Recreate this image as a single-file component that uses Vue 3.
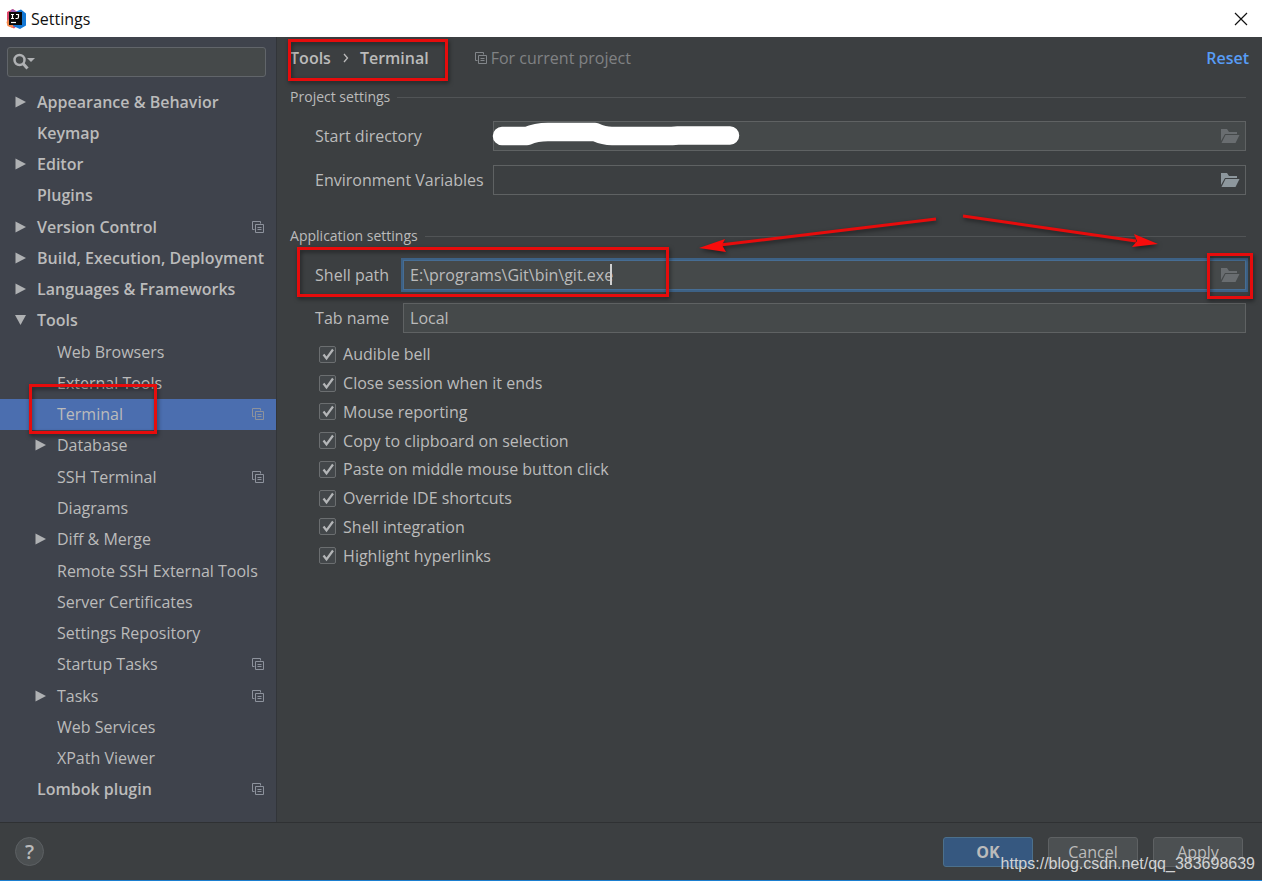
<script setup>
import { ref } from 'vue'

const tree = [
  { label: 'Appearance & Behavior', level: 0, arrow: 'right' },
  { label: 'Keymap', level: 0 },
  { label: 'Editor', level: 0, arrow: 'right' },
  { label: 'Plugins', level: 0 },
  { label: 'Version Control', level: 0, arrow: 'right', project: true },
  { label: 'Build, Execution, Deployment', level: 0, arrow: 'right' },
  { label: 'Languages & Frameworks', level: 0, arrow: 'right' },
  { label: 'Tools', level: 0, arrow: 'down' },
  { label: 'Web Browsers', level: 1 },
  { label: 'External Tools', level: 1 },
  { label: 'Terminal', level: 1, project: true, selected: true },
  { label: 'Database', level: 1, arrow: 'right' },
  { label: 'SSH Terminal', level: 1, project: true },
  { label: 'Diagrams', level: 1 },
  { label: 'Diff & Merge', level: 1, arrow: 'right' },
  { label: 'Remote SSH External Tools', level: 1 },
  { label: 'Server Certificates', level: 1 },
  { label: 'Settings Repository', level: 1 },
  { label: 'Startup Tasks', level: 1, project: true },
  { label: 'Tasks', level: 1, arrow: 'right', project: true },
  { label: 'Web Services', level: 1 },
  { label: 'XPath Viewer', level: 1 },
  { label: 'Lombok plugin', level: 0, project: true },
]

const options = ref([
  { id: 'bell', label: 'Audible bell', on: true },
  { id: 'close', label: 'Close session when it ends', on: true },
  { id: 'mouse', label: 'Mouse reporting', on: true },
  { id: 'copy', label: 'Copy to clipboard on selection', on: true },
  { id: 'paste', label: 'Paste on middle mouse button click', on: true },
  { id: 'override', label: 'Override IDE shortcuts', on: true },
  { id: 'shell', label: 'Shell integration', on: true },
  { id: 'links', label: 'Highlight hyperlinks', on: true },
])

const search = ref('')
const startDirectory = ref('')
const environment = ref('')
const shellPath = ref('E:\\programs\\Git\\bin\\git.exe')
const tabName = ref('Local')
</script>

<template>
  <div class="window">
    <svg class="defs" width="0" height="0" aria-hidden="true">
      <symbol id="copy-icon" viewBox="0 0 12 12">
        <path d="M2.500 8.500h-2v-8h8v2M3.500 11.500v-8h8v8h-8" fill="none" stroke="currentColor" />
        <path d="M5.500 6.500h4M5.500 8.500h4" fill="none" stroke="currentColor" />
      </symbol>
      <symbol id="folder-icon" viewBox="0 0 20 16">
        <path d="M1 14V1h6l2 3h8v2H5L1 13z" fill="currentColor" />
        <path d="M5.500 7H19.500l-4 8H1.500z" fill="currentColor" />
      </symbol>
    </svg>

    <header class="titlebar">
      <svg class="logo" width="20" height="20" viewBox="0 0 20 20" aria-hidden="true">
        <path d="M1 3l6-3 4 3v14l-3 2.500-6-3-1-6z" fill="#e04a6e" />
        <path d="M0.500 13l3-4 4 8-1 2-5-2z" fill="#f4884a" />
        <path d="M10 2.500l5-2 5 4v12l-6 3.500-7-3z" fill="#1478d4" />
        <path d="M6 0l5 2.500-2 2-5-1z" fill="#9a5ab0" />
        <rect x="3" y="3" width="13" height="13" fill="#080808" />
        <path d="M5 5.500h3M6.500 5.500v4M5 9.500h3M10 5.500h3M12.500 5v3q0 1.500-1.500 1.500h-1.500" fill="none" stroke="#fff" stroke-width="1.200" />
        <path d="M5 13.500h5" stroke="#fff" stroke-width="1.200" />
      </svg>
      <span class="title">Settings</span>
      <button class="close" aria-label="Close">
        <svg width="14" height="14" viewBox="0 0 14 14"><path d="M1 1l12 12M13 1L1 13" stroke="#111" stroke-width="1.200" /></svg>
      </button>
    </header>

    <div class="body">
      <aside class="sidebar">
        <label class="search">
          <svg width="24" height="18" viewBox="0 0 24 18" aria-hidden="true">
            <circle cx="6.500" cy="7" r="5" fill="none" stroke="#afb1b3" stroke-width="2.500" />
            <path d="M10 10.500l4.500 5" stroke="#afb1b3" stroke-width="3" />
            <path d="M14 5h8l-4 4z" fill="#afb1b3" />
          </svg>
          <input v-model="search" type="text" aria-label="Search settings" />
        </label>
        <ul class="tree">
          <li v-for="item in tree" :key="item.label" :class="{ child: item.level, selected: item.selected }">
            <span class="twist">
              <svg v-if="item.arrow === 'right'" width="12" height="12" viewBox="0 0 12 12"><path d="M0.500 0.500l10.500 5.500-10.500 5.500z" fill="#afb1b3" /></svg>
              <svg v-if="item.arrow === 'down'" width="12" height="12" viewBox="0 0 12 12"><path d="M0 1h11L5.500 11z" fill="#afb1b3" /></svg>
            </span>
            <span class="name">{{ item.label }}</span>
            <svg v-if="item.project" class="copy" width="12" height="12"><use href="#copy-icon" /></svg>
          </li>
        </ul>
      </aside>

      <main class="content">
        <div class="heading">
          <span class="crumb">Tools</span>
          <svg class="chevron" width="6" height="10" viewBox="0 0 6 10"><path d="M1 1l3.500 4L1 9" fill="none" stroke="#bbb" stroke-width="1.300" /></svg>
          <span class="crumb">Terminal</span>
          <svg class="scope-icon" width="12" height="12"><use href="#copy-icon" /></svg>
          <span class="scope">For current project</span>
          <a class="reset" href="#">Reset</a>
        </div>

        <section class="project">
          <h2>Project settings</h2>
          <div class="row">
            <label for="start">Start directory</label>
            <div class="field dim">
              <input id="start" v-model="startDirectory" type="text" />
              <button aria-label="Browse start directory"><svg width="20" height="16"><use href="#folder-icon" /></svg></button>
              <svg class="redaction" width="250" height="26" viewBox="0 0 250 26" aria-hidden="true">
                <path d="M10 14H35Q44 10 56 10H103Q112 14 120 14H180L186 13.500H238" fill="none" stroke="#fff" stroke-width="18.500" stroke-linecap="round" stroke-linejoin="round" />
              </svg>
            </div>
          </div>
          <div class="row">
            <label for="env">Environment Variables</label>
            <div class="field plain">
              <input id="env" v-model="environment" type="text" />
              <button aria-label="Edit environment variables"><svg width="20" height="16"><use href="#folder-icon" /></svg></button>
            </div>
          </div>
        </section>

        <section class="application">
          <h2>Application settings</h2>
          <div class="row">
            <label for="shell">Shell path</label>
            <div class="field dim focused">
              <input id="shell" v-model="shellPath" type="text" />
              <button aria-label="Browse shell path"><svg width="20" height="16"><use href="#folder-icon" /></svg></button>
              <span class="caret"></span>
            </div>
          </div>
          <div class="row">
            <label for="tab">Tab name</label>
            <div class="field"><input id="tab" v-model="tabName" type="text" /></div>
          </div>
          <div class="options">
            <label v-for="o in options" :key="o.id" :for="o.id">
              <span class="box">
                <input :id="o.id" v-model="o.on" type="checkbox" />
                <svg v-if="o.on" width="18" height="18" viewBox="0 0 18 18" aria-hidden="true"><path d="M4.500 8.500l3 4 6.500-9" fill="none" stroke="#b4b6b8" stroke-width="2.200" /></svg>
              </span>
              <span>{{ o.label }}</span>
            </label>
          </div>
        </section>
      </main>
    </div>

    <footer class="footer">
      <button class="help" aria-label="Help">?</button>
      <button class="action primary">OK</button>
      <button class="action">Cancel</button>
      <button class="action">Apply</button>
    </footer>

    <svg class="marks" width="1262" height="881" viewBox="0 0 1262 881" aria-hidden="true">
      <g fill="none" stroke="#e60c0c" stroke-width="3">
        <rect x="289.500" y="40.500" width="157" height="39" />
        <rect x="30.500" y="385.500" width="125" height="47" />
        <rect x="298.500" y="248.500" width="369" height="47" />
        <rect x="1208.500" y="254.500" width="43" height="43" />
        <path d="M936 219L720 245M963 216L1136 241" />
      </g>
      <path d="M699 248L725 239L722 245L726 252ZM1158 244L1134 234L1137 241L1132 247Z" fill="#f80c0c" />
    </svg>
    <span class="watermark">https://blog.csdn.net/qq_383698639</span>
  </div>
</template>

<style>
body {
  margin: 0;
  background: #3c3f41;
}
</style>

<style scoped>
* {
  box-sizing: border-box;
}
.window {
  position: relative;
  display: flex;
  flex-direction: column;
  min-height: 100vh;
  overflow: hidden;
  background: #3c3f41;
  color: #bbbbbb;
  font: 16px/20px "Open Sans", "Noto Sans", sans-serif;
}
.defs {
  position: absolute;
}
button,
input {
  margin: 0;
  padding: 0;
  border: 0;
  background: none;
  color: inherit;
  font: inherit;
  outline: 0;
}
.titlebar {
  display: flex;
  align-items: center;
  height: 37px;
  padding: 0 14px 0 6px;
  background: #fff;
  color: #111;
}
.title {
  margin-left: 5px;
}
.close {
  display: flex;
  margin-left: auto;
}
.body {
  display: flex;
  flex: 1;
}
.sidebar {
  display: flex;
  flex-direction: column;
  flex: 0 0 277px;
  border-right: 1px solid #323539;
  padding: 10px 0 17px;
  background: #3f434c;
}
.search {
  display: flex;
  align-items: center;
  height: 30px;
  margin: 0 10px 9px 7px;
  padding-left: 5px;
  border: 1px solid #61656a;
  border-radius: 3px;
  background: #45494a;
}
.search input {
  flex: 1;
  min-width: 0;
}
.tree {
  display: grid;
  flex: 1;
  grid-auto-rows: 1fr;
  margin: 0;
  padding: 0;
  list-style: none;
}
.tree li {
  display: flex;
  align-items: center;
  padding: 0 12px 0 15px;
  font-weight: 600;
  white-space: nowrap;
}
.tree li.child {
  padding-left: 35px;
  font-weight: 400;
}
.tree li.selected {
  background: #4b6eaf;
}
.twist {
  display: flex;
  flex: 0 0 22px;
}
.name {
  flex: 1;
}
.copy {
  color: #8d929c;
}
.content {
  flex: 1;
  min-width: 0;
  padding: 0 16px 0 13px;
}
.heading {
  display: flex;
  align-items: center;
  height: 41px;
  margin-right: -3px;
}
.crumb {
  font-weight: 600;
}
.chevron {
  margin: 0 11px 0 12px;
}
.scope-icon {
  margin: 0 4px 0 46px;
  color: #82868a;
}
.scope {
  color: #808284;
}
.reset {
  margin-left: auto;
  color: #589df6;
  font-weight: 600;
  text-decoration: none;
}
h2 {
  display: flex;
  align-items: center;
  gap: 7px;
  margin: 9px 0 14px;
  font-size: 14px;
  font-weight: 400;
}
h2::after {
  content: "";
  flex: 1;
  height: 1px;
  background: #515456;
}
.application h2 {
  margin-top: 31px;
}
.row {
  display: flex;
  align-items: center;
  margin: 0 0 14px 25px;
}
.row label {
  flex: 0 0 178px;
}
.application .row {
  margin-bottom: 13px;
}
.application .row label {
  flex-basis: 88px;
}
.field {
  position: relative;
  display: flex;
  align-items: center;
  flex: 1;
  height: 30px;
  padding: 0 5px 0 6px;
  border: 1px solid #5f6263;
  background: #45494a;
}
.field.plain {
  background: #3c3f41;
}
.field.focused {
  border-color: #466d94;
  box-shadow: 0 0 0 2px #3d6185;
}
.field input {
  flex: 1;
  min-width: 0;
}
.field button {
  display: flex;
  color: #8d979d;
}
.field.dim button {
  color: #696d70;
}
.caret {
  position: absolute;
  left: 206px;
  top: 3px;
  width: 2px;
  height: 21px;
  background: #d0d0d0;
}
.redaction {
  position: absolute;
  left: -2px;
  top: 0;
}
.options {
  display: grid;
  grid-auto-rows: 1fr;
  justify-items: start;
  min-height: 230px;
  margin: -6px 0 0 29px;
}
.options label {
  display: flex;
  align-items: center;
  gap: 7px;
}
.box {
  position: relative;
  display: flex;
}
.box input {
  appearance: none;
  width: 17px;
  height: 17px;
  border: 1px solid #6b6e70;
  border-radius: 2px;
  background: #43474a;
}
.box svg {
  position: absolute;
  left: 0;
  top: 0;
  pointer-events: none;
}
.footer {
  display: flex;
  align-items: center;
  gap: 15px;
  height: 59px;
  padding: 0 19px 0 15px;
  border-top: 1px solid #2f3133;
  border-bottom: 1px solid #1b7fd0;
}
.help {
  width: 29px;
  height: 29px;
  margin-right: auto;
  border: 1px solid #5c6063;
  border-radius: 50%;
  background: #4c5052;
  font-size: 20px;
  font-weight: 600;
}
.action {
  width: 90px;
  height: 30px;
  border: 1px solid #5e6163;
  border-radius: 3px;
  background: #4c5052;
}
.action.primary {
  border-color: #4c708c;
  background: #365880;
  font-weight: 700;
}
.marks {
  position: absolute;
  left: 0;
  top: 0;
  pointer-events: none;
  filter: drop-shadow(1px 2px 2px rgba(0, 0, 0, 0.5));
}
.watermark {
  position: absolute;
  right: 7px;
  bottom: 7px;
  color: #d2d3d4;
  font-family: "Liberation Sans", sans-serif;
  pointer-events: none;
}
</style>
